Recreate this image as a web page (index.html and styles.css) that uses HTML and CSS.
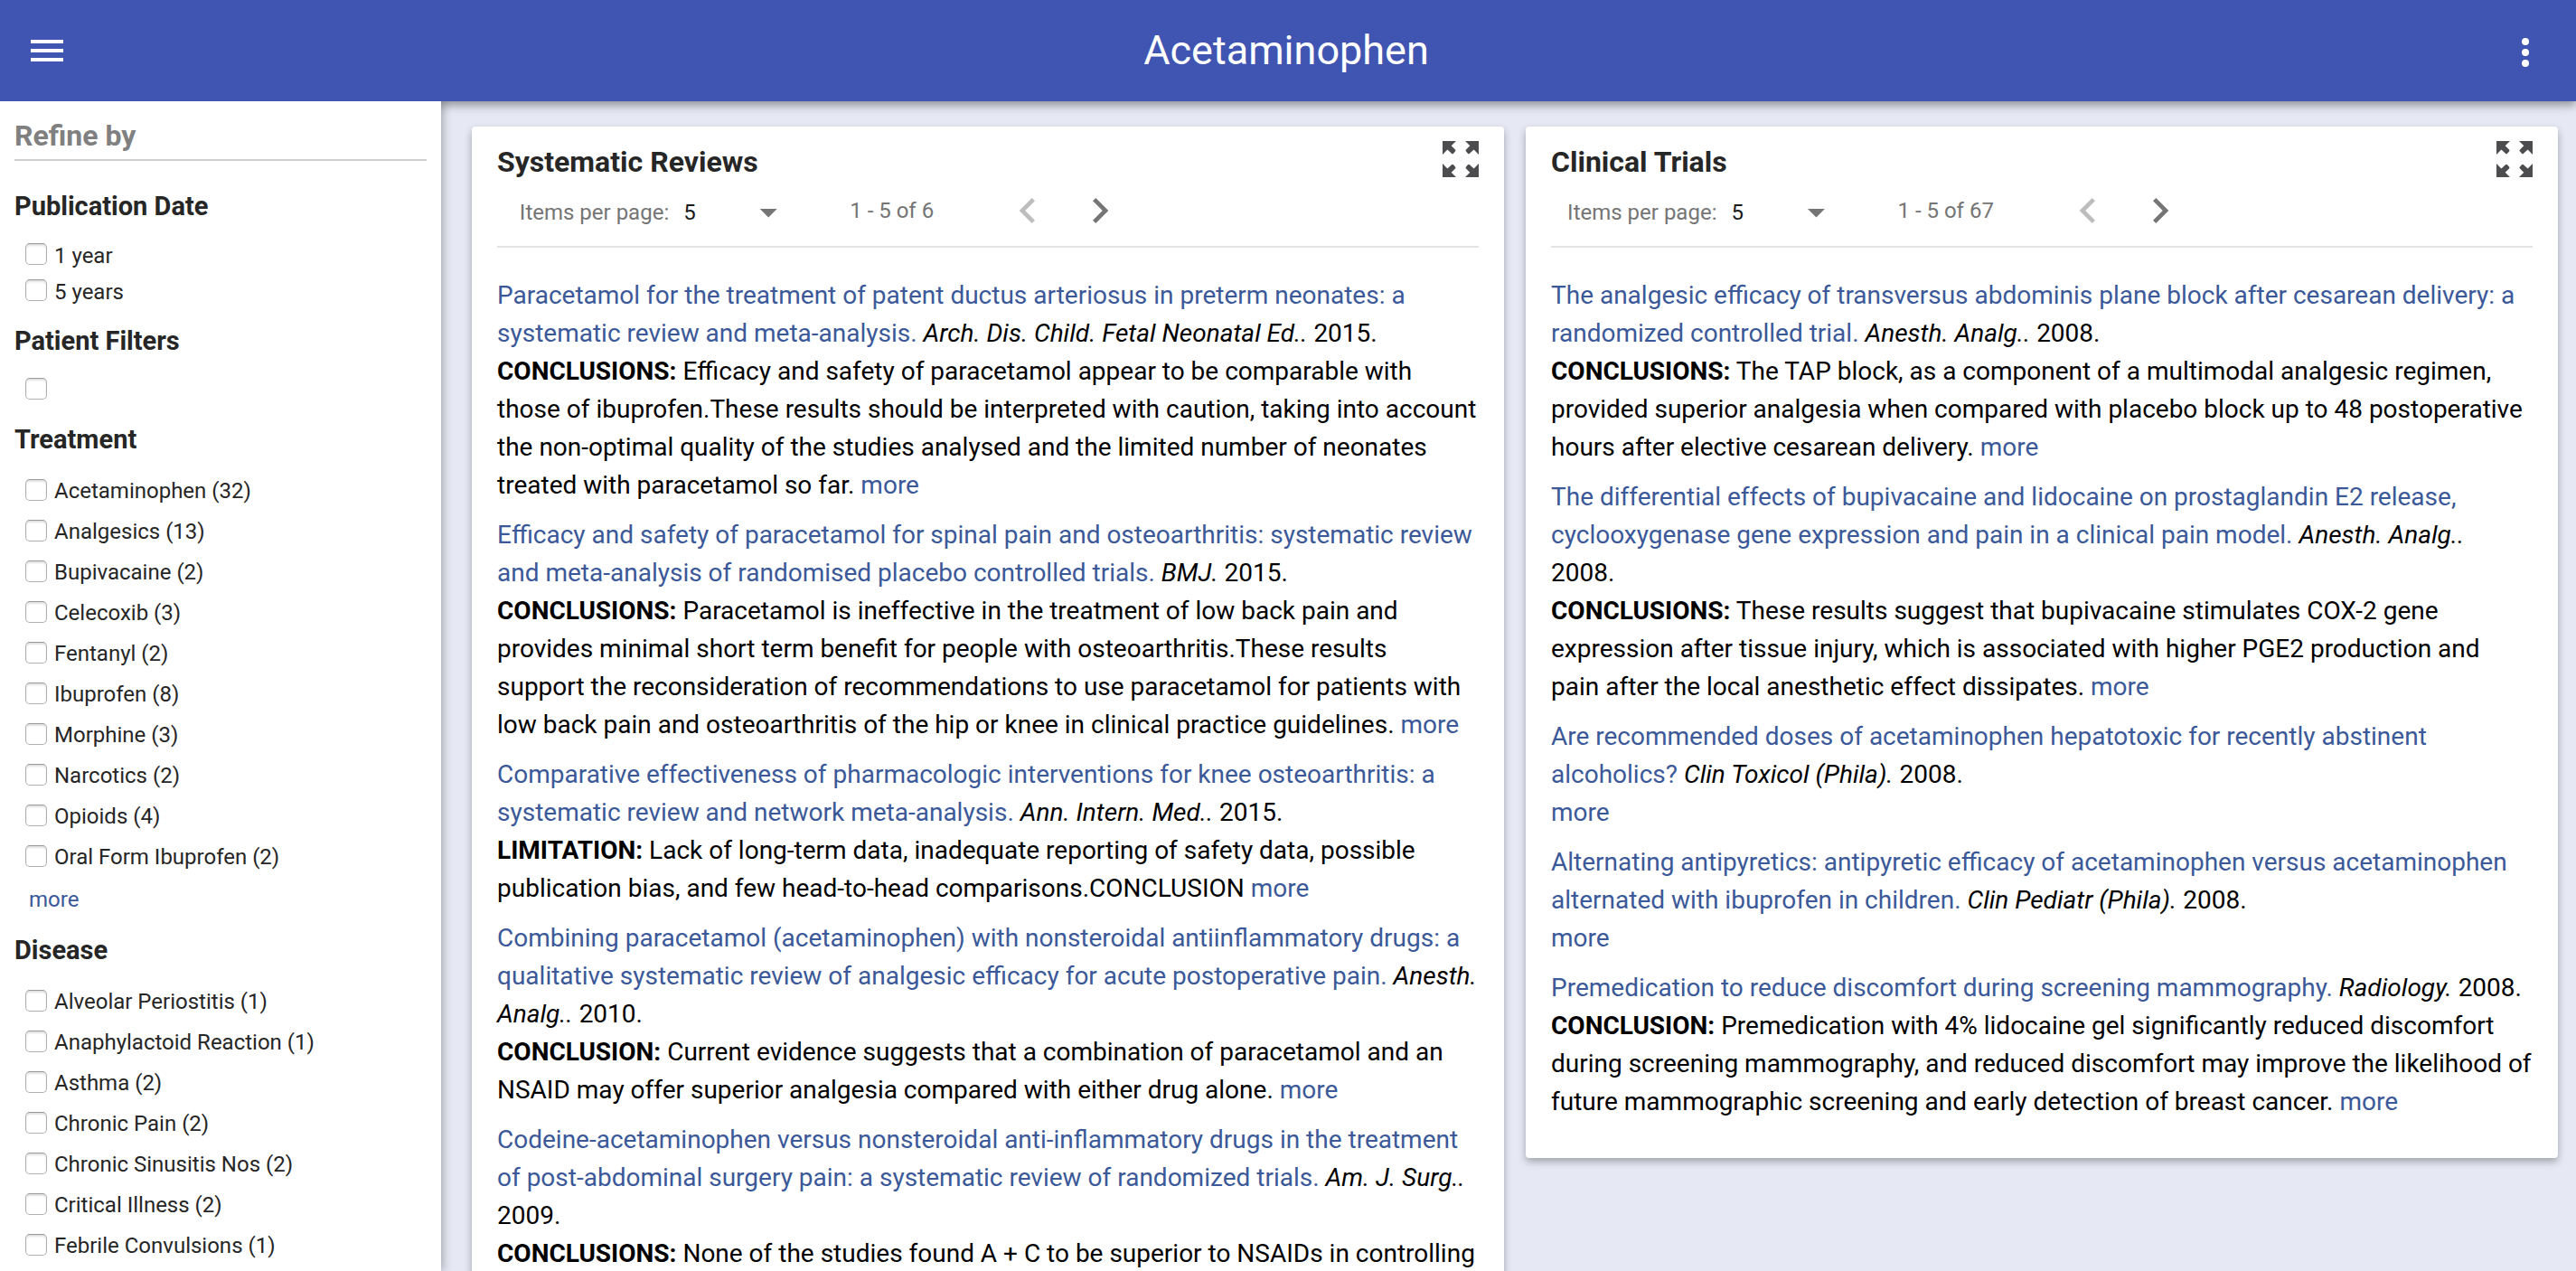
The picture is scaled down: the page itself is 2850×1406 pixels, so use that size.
FILE: index.html
```html
<!DOCTYPE html>
<html lang="en">
<head>
<meta charset="utf-8">
<meta name="viewport" content="width=device-width, initial-scale=1">
<title>Acetaminophen</title>
<link rel="stylesheet" href="styles.css">
</head>
<body>
<svg class="sprite" aria-hidden="true">
  <symbol id="expand" viewBox="0 0 40 40">
    <g id="corner-arrow"><path d="M0 0H15L9.7 5.3L14 9.6Q15 10.6 14 11.6L12 13.8Q11 14.8 10 13.8L5.4 9.4L0 15Z"/></g>
    <use href="#corner-arrow" transform="translate(40 0) scale(-1 1)"/>
    <use href="#corner-arrow" transform="translate(0 40) scale(1 -1)"/>
    <use href="#corner-arrow" transform="translate(40 40) scale(-1 -1)"/>
  </symbol>
  <symbol id="prev" viewBox="0 0 48 48"><path d="M30.83 14.83 28 12 16 24 28 36 30.83 33.17 21.66 24Z"/></symbol>
  <symbol id="next" viewBox="0 0 48 48"><path d="M20 12 17.17 14.83 26.34 24 17.17 33.17 20 36 32 24Z"/></symbol>
</svg>

<header class="toolbar">
  <button class="icon-button" type="button" aria-label="Menu">
    <svg viewBox="0 0 24 24"><path d="M3 18h18v-2H3v2zm0-5h18v-2H3v2zm0-7v2h18V6H3z"/></svg>
  </button>
  <h1 class="toolbar-title">Acetaminophen</h1>
  <button class="icon-button more-button" type="button" aria-label="More options">
    <svg viewBox="0 0 24 24"><circle cx="12" cy="6" r="2"/><circle cx="12" cy="12" r="2"/><circle cx="12" cy="18" r="2"/></svg>
  </button>
</header>

<div class="layout">
  <aside class="sidebar">
    <h2 class="sidebar-title">Refine by</h2>

    <section class="filter-group">
      <h3 class="filter-title">Publication Date</h3>
      <ul class="filter-list compact">
        <li><label><input type="checkbox">1 year</label></li>
        <li><label><input type="checkbox">5 years</label></li>
      </ul>
    </section>

    <section class="filter-group">
      <h3 class="filter-title">Patient Filters</h3>
      <ul class="filter-list compact">
        <li><label><input type="checkbox" aria-label="Patient filter"></label></li>
      </ul>
    </section>

    <section class="filter-group">
      <h3 class="filter-title">Treatment</h3>
      <ul class="filter-list">
        <li><label><input type="checkbox">Acetaminophen (32)</label></li>
        <li><label><input type="checkbox">Analgesics (13)</label></li>
        <li><label><input type="checkbox">Bupivacaine (2)</label></li>
        <li><label><input type="checkbox">Celecoxib (3)</label></li>
        <li><label><input type="checkbox">Fentanyl (2)</label></li>
        <li><label><input type="checkbox">Ibuprofen (8)</label></li>
        <li><label><input type="checkbox">Morphine (3)</label></li>
        <li><label><input type="checkbox">Narcotics (2)</label></li>
        <li><label><input type="checkbox">Opioids (4)</label></li>
        <li><label><input type="checkbox">Oral Form Ibuprofen (2)</label></li>
      </ul>
      <a class="filter-more" href="#treatment">more</a>
    </section>

    <section class="filter-group">
      <h3 class="filter-title">Disease</h3>
      <ul class="filter-list">
        <li><label><input type="checkbox">Alveolar Periostitis (1)</label></li>
        <li><label><input type="checkbox">Anaphylactoid Reaction (1)</label></li>
        <li><label><input type="checkbox">Asthma (2)</label></li>
        <li><label><input type="checkbox">Chronic Pain (2)</label></li>
        <li><label><input type="checkbox">Chronic Sinusitis Nos (2)</label></li>
        <li><label><input type="checkbox">Critical Illness (2)</label></li>
        <li><label><input type="checkbox">Febrile Convulsions (1)</label></li>
      </ul>
    </section>
  </aside>

  <main class="results">
    <section class="card">
      <header class="card-header">
        <h2 class="card-title">Systematic Reviews</h2>
        <button class="expand-button" type="button" aria-label="Expand systematic reviews"><svg><use href="#expand"/></svg></button>
      </header>
      <div class="paginator">
        <div class="paginator-controls">
          <label class="page-size" for="reviews-size">Items per page:</label>
          <span class="select-box"><select id="reviews-size"><option>5</option><option>10</option></select></span>
          <span class="page-range">1 - 5 of 6</span>
          <button class="page-button" type="button" aria-label="Previous page" disabled><svg><use href="#prev"/></svg></button>
          <button class="page-button" type="button" aria-label="Next page"><svg><use href="#next"/></svg></button>
        </div>
      </div>
      <article class="entry">
        <a href="#r1">Paracetamol for the treatment of patent ductus arteriosus in preterm neonates: a systematic review and meta-analysis.</a> <cite>Arch. Dis. Child. Fetal Neonatal Ed..</cite> 2015.
        <p><b>CONCLUSIONS:</b> Efficacy and safety of paracetamol appear to be comparable with those of ibuprofen.These results should be interpreted with caution, taking into account the non-optimal quality of the studies analysed and the limited number of neonates treated with paracetamol so far. <a href="#r1">more</a></p>
      </article>
      <article class="entry">
        <a href="#r2">Efficacy and safety of paracetamol for spinal pain and osteoarthritis: systematic review and meta-analysis of randomised placebo controlled trials.</a> <cite>BMJ.</cite> 2015.
        <p><b>CONCLUSIONS:</b> Paracetamol is ineffective in the treatment of low back pain and provides minimal short term benefit for people with osteoarthritis.These results support the reconsideration of recommendations to use paracetamol for patients with low back pain and osteoarthritis of the hip or knee in clinical practice guidelines. <a href="#r2">more</a></p>
      </article>
      <article class="entry">
        <a href="#r3">Comparative effectiveness of pharmacologic interventions for knee osteoarthritis: a systematic review and network meta-analysis.</a> <cite>Ann. Intern. Med..</cite> 2015.
        <p><b>LIMITATION:</b> Lack of long-term data, inadequate reporting of safety data, possible publication bias, and few head-to-head comparisons.CONCLUSION <a href="#r3">more</a></p>
      </article>
      <article class="entry">
        <a href="#r4">Combining paracetamol (acetaminophen) with nonsteroidal antiinflammatory drugs: a qualitative systematic review of analgesic efficacy for acute postoperative pain.</a> <cite>Anesth. Analg..</cite> 2010.
        <p><b>CONCLUSION:</b> Current evidence suggests that a combination of paracetamol and an NSAID may offer superior analgesia compared with either drug alone. <a href="#r4">more</a></p>
      </article>
      <article class="entry">
        <a href="#r5">Codeine-acetaminophen versus nonsteroidal anti-inflammatory drugs in the treatment of post-abdominal surgery pain: a systematic review of randomized trials.</a> <cite>Am. J. Surg..</cite> 2009.
        <p><b>CONCLUSIONS:</b> None of the studies found A + C to be superior to NSAIDs in controlling</p>
      </article>
    </section>

    <section class="card">
      <header class="card-header">
        <h2 class="card-title">Clinical Trials</h2>
        <button class="expand-button" type="button" aria-label="Expand clinical trials"><svg><use href="#expand"/></svg></button>
      </header>
      <div class="paginator">
        <div class="paginator-controls">
          <label class="page-size" for="trials-size">Items per page:</label>
          <span class="select-box"><select id="trials-size"><option>5</option><option>10</option></select></span>
          <span class="page-range">1 - 5 of 67</span>
          <button class="page-button" type="button" aria-label="Previous page" disabled><svg><use href="#prev"/></svg></button>
          <button class="page-button" type="button" aria-label="Next page"><svg><use href="#next"/></svg></button>
        </div>
      </div>
      <article class="entry">
        <a href="#t1">The analgesic efficacy of transversus abdominis plane block after cesarean delivery: a randomized controlled trial.</a> <cite>Anesth. Analg..</cite> 2008.
        <p><b>CONCLUSIONS:</b> The TAP block, as a component of a multimodal analgesic regimen, provided superior analgesia when compared with placebo block up to 48 postoperative hours after elective cesarean delivery. <a href="#t1">more</a></p>
      </article>
      <article class="entry">
        <a href="#t2">The differential effects of bupivacaine and lidocaine on prostaglandin E2 release, cyclooxygenase gene expression and pain in a clinical pain model.</a> <cite>Anesth. Analg..</cite> 2008.
        <p><b>CONCLUSIONS:</b> These results suggest that bupivacaine stimulates COX-2 gene expression after tissue injury, which is associated with higher PGE2 production and pain after the local anesthetic effect dissipates. <a href="#t2">more</a></p>
      </article>
      <article class="entry">
        <a href="#t3">Are recommended doses of acetaminophen hepatotoxic for recently abstinent alcoholics?</a> <cite>Clin Toxicol (Phila).</cite> 2008.
        <p><a href="#t3">more</a></p>
      </article>
      <article class="entry">
        <a href="#t4">Alternating antipyretics: antipyretic efficacy of acetaminophen versus acetaminophen alternated with ibuprofen in children.</a> <cite>Clin Pediatr (Phila).</cite> 2008.
        <p><a href="#t4">more</a></p>
      </article>
      <article class="entry">
        <a href="#t5">Premedication to reduce discomfort during screening mammography.</a> <cite>Radiology.</cite> 2008.
        <p><b>CONCLUSION:</b> Premedication with 4% lidocaine gel significantly reduced discomfort during screening mammography, and reduced discomfort may improve the likelihood of future mammographic screening and early detection of breast cancer. <a href="#t5">more</a></p>
      </article>
    </section>
  </main>
</div>
</body>
</html>
```
FILE: styles.css
```css
* {
  box-sizing: border-box;
}

body {
  display: flex;
  flex-direction: column;
  height: 100vh;
  margin: 0;
  overflow: hidden;
  background: #e6e8f4;
  color: #262626;
  font-family: Roboto, "Liberation Sans", sans-serif;
}

h1, h2, h3, p, ul {
  margin: 0;
  padding: 0;
}

button {
  padding: 0;
  border: 0;
  background: none;
  color: inherit;
  cursor: pointer;
}

svg {
  display: block;
  width: 100%;
  height: 100%;
  fill: currentColor;
}

a {
  color: #3b5998;
  text-decoration: none;
}

.sprite {
  position: absolute;
  width: 0;
  height: 0;
}

/* Top bar */
.toolbar {
  display: flex;
  flex: none;
  align-items: center;
  justify-content: space-between;
  height: 112px;
  padding: 0 32px 0 28px;
  background: #4055b2;
  box-shadow: 0 4px 10px rgba(0, 0, 0, 0.4);
  color: #fff;
}

.toolbar-title {
  font-size: 45px;
  font-weight: 400;
  line-height: 56px;
}

.icon-button {
  width: 48px;
  height: 48px;
}

.more-button {
  margin-top: 4px;
}

.layout {
  display: flex;
  flex: 1;
  min-height: 0;
}

/* Filters */
.sidebar {
  position: relative;
  z-index: 1;
  flex: none;
  width: 488px;
  padding: 18px 16px 16px;
  overflow: hidden;
  background: #fff;
  box-shadow: 2px 0 10px rgba(0, 0, 0, 0.3);
  clip-path: inset(0 -24px 0 0);
}

.sidebar-title {
  margin-bottom: 34px;
  padding-bottom: 6px;
  border-bottom: 2px solid #cfcfcf;
  color: #808080;
  font-size: 32px;
  line-height: 40px;
}

.filter-group {
  margin-bottom: 18px;
}

.filter-title {
  font-size: 29px;
  line-height: 32px;
}

.filter-list {
  padding: 19px 12px 0;
  font-size: 24px;
  line-height: 45px;
  list-style: none;
}

.filter-list label {
  display: flex;
  align-items: center;
  gap: 8px;
}

.compact {
  line-height: 40px;
}

.compact label {
  min-height: 40px;
}

.filter-list input {
  appearance: none;
  width: 24px;
  height: 24px;
  margin: 0 0 4px;
  border: 1px solid #b0b0b0;
  border-top-color: #999;
  border-radius: 5px;
  background: #fff;
  box-shadow: inset 0 2px 2px rgba(0, 0, 0, 0.12);
}

.filter-more {
  display: block;
  padding: 8px 16px 6px;
  font-size: 24px;
  line-height: 32px;
}

/* Result cards */
.results {
  display: grid;
  flex: 1;
  grid-template-columns: 1fr 1fr;
  align-items: start;
  gap: 24px;
  padding: 28px 20px 28px 34px;
  overflow: hidden;
}

.card {
  padding: 16px 28px 28px;
  border-radius: 4px;
  background: #fff;
  box-shadow: 0 4px 8px rgba(0, 0, 0, 0.3);
}

.card-header {
  display: flex;
  justify-content: space-between;
}

.card-title {
  padding-top: 3px;
  font-size: 32px;
  line-height: 40px;
}

.expand-button {
  width: 40px;
  height: 40px;
  color: #4d4d4f;
}

.paginator {
  margin-bottom: 32px;
  border-bottom: 2px solid #e3e3e3;
  color: #757575;
  font-size: 24px;
}

.paginator-controls {
  display: flex;
  align-items: center;
  justify-content: center;
  max-width: 720px;
  height: 73px;
  padding-bottom: 6px;
}

.page-size,
.select-box {
  margin-top: 4px;
}

.select-box {
  position: relative;
  width: 112px;
  margin-left: 12px;
}

.select-box::after {
  position: absolute;
  top: calc(50% - 4px);
  right: 4px;
  width: 20px;
  height: 10px;
  background: #757575;
  clip-path: polygon(0 0, 100% 0, 50% 100%);
  content: "";
  pointer-events: none;
}

.select-box select {
  appearance: none;
  display: block;
  width: 100%;
  padding: 4px 4px;
  border: 0;
  background: none;
  color: #1a1a1a;
  font: inherit;
}

.page-range {
  margin: 0 76px;
}

.page-button {
  width: 56px;
  height: 56px;
}

.page-button + .page-button {
  margin-left: 24px;
}

.page-button:disabled {
  color: #bdbdbd;
}

.entry {
  margin-bottom: 13px;
  color: #000;
  font-size: 28px;
  line-height: 42px;
}
```
